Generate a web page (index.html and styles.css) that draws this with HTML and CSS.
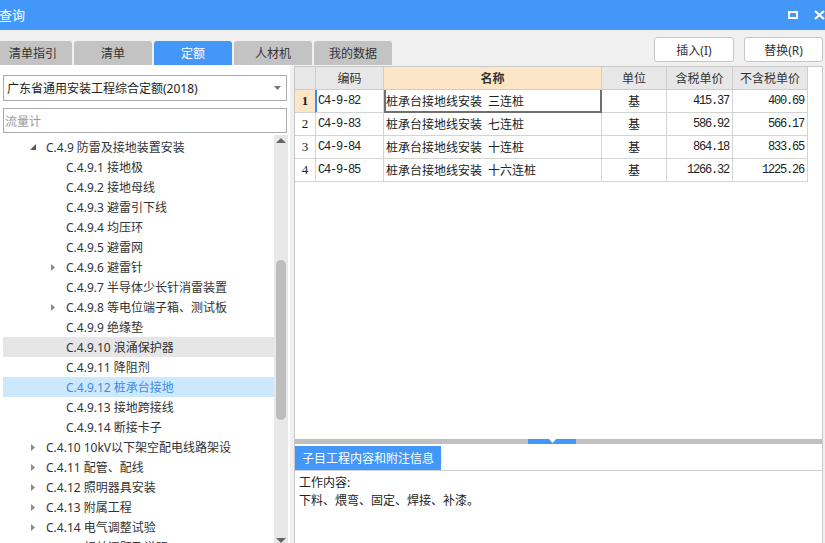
FILE: index.html
```html
<!DOCTYPE html>
<html lang="zh-CN">
<head>
<meta charset="utf-8">
<title>查询</title>
<link rel="stylesheet" href="styles.css">
</head>
<body>
<div class="win">
  <div class="titlebar">
    <span class="title">查询</span>
    <div class="winctl">
      <span class="max"></span>
      <svg class="close" width="11" height="10" viewBox="0 0 11 10"><path d="M1 1 L10 9 M10 1 L1 9" stroke="#fff" stroke-width="2.2" fill="none"/></svg>
    </div>
  </div>
  <div class="toolbar">
    <div class="tabs">
      <div class="tab">清单指引</div>
      <div class="tab">清单</div>
      <div class="tab on">定额</div>
      <div class="tab">人材机</div>
      <div class="tab">我的数据</div>
    </div>
    <div class="btns">
      <div class="btn">插入(I)</div>
      <div class="btn b2">替换(R)</div>
    </div>
  </div>
  <div class="main">
    <div class="left">
      <div class="select"><span>广东省通用安装工程综合定额(2018)</span><svg class="caret" width="7" height="4" viewBox="0 0 7 4"><path d="M0 0 H7 L3.5 4Z" fill="#777"/></svg></div>
      <div class="search">流量计</div>
      <div class="treewrap">
        <div class="tree">
          <div class="row l1"><span class="tw"><svg width="6" height="6" viewBox="0 0 6 6"><path d="M6 0 V6 H0Z" fill="#595959"/></svg></span><span>C.4.9 防雷及接地装置安装</span></div>
          <div class="row l2"><span class="tw"></span><span>C.4.9.1 接地极</span></div>
          <div class="row l2"><span class="tw"></span><span>C.4.9.2 接地母线</span></div>
          <div class="row l2"><span class="tw"></span><span>C.4.9.3 避雷引下线</span></div>
          <div class="row l2"><span class="tw"></span><span>C.4.9.4 均压环</span></div>
          <div class="row l2"><span class="tw"></span><span>C.4.9.5 避雷网</span></div>
          <div class="row l2"><span class="tw"><svg width="4" height="7" viewBox="0 0 4 7"><path d="M0 0 L4 3.5 L0 7Z" fill="#8a8a8a"/></svg></span><span>C.4.9.6 避雷针</span></div>
          <div class="row l2"><span class="tw"></span><span>C.4.9.7 半导体少长针消雷装置</span></div>
          <div class="row l2"><span class="tw"><svg width="4" height="7" viewBox="0 0 4 7"><path d="M0 0 L4 3.5 L0 7Z" fill="#8a8a8a"/></svg></span><span>C.4.9.8 等电位端子箱、测试板</span></div>
          <div class="row l2"><span class="tw"></span><span>C.4.9.9 绝缘垫</span></div>
          <div class="row l2 hover"><span class="tw"></span><span>C.4.9.10 浪涌保护器</span></div>
          <div class="row l2"><span class="tw"></span><span>C.4.9.11 降阻剂</span></div>
          <div class="row l2 sel"><span class="tw"></span><span>C.4.9.12 桩承台接地</span></div>
          <div class="row l2"><span class="tw"></span><span>C.4.9.13 接地跨接线</span></div>
          <div class="row l2"><span class="tw"></span><span>C.4.9.14 断接卡子</span></div>
          <div class="row l1"><span class="tw"><svg width="4" height="7" viewBox="0 0 4 7"><path d="M0 0 L4 3.5 L0 7Z" fill="#8a8a8a"/></svg></span><span>C.4.10 10kV以下架空配电线路架设</span></div>
          <div class="row l1"><span class="tw"><svg width="4" height="7" viewBox="0 0 4 7"><path d="M0 0 L4 3.5 L0 7Z" fill="#8a8a8a"/></svg></span><span>C.4.11 配管、配线</span></div>
          <div class="row l1"><span class="tw"><svg width="4" height="7" viewBox="0 0 4 7"><path d="M0 0 L4 3.5 L0 7Z" fill="#8a8a8a"/></svg></span><span>C.4.12 照明器具安装</span></div>
          <div class="row l1"><span class="tw"><svg width="4" height="7" viewBox="0 0 4 7"><path d="M0 0 L4 3.5 L0 7Z" fill="#8a8a8a"/></svg></span><span>C.4.13 附属工程</span></div>
          <div class="row l1"><span class="tw"><svg width="4" height="7" viewBox="0 0 4 7"><path d="M0 0 L4 3.5 L0 7Z" fill="#8a8a8a"/></svg></span><span>C.4.14 电气调整试验</span></div>
          <div class="row l1"><span class="tw"><svg width="4" height="7" viewBox="0 0 4 7"><path d="M0 0 L4 3.5 L0 7Z" fill="#8a8a8a"/></svg></span><span>C.4.15 相关问题及说明</span></div>
        </div>
        <div class="vs">
          <div class="arr"><svg width="10" height="5" viewBox="0 0 10 5"><path d="M0 5 L5 0 L10 5Z" fill="#666"/></svg></div>
          <div class="thumb"></div>
          <div class="arr down"><svg width="10" height="5" viewBox="0 0 10 5"><path d="M0 0 L5 5 L10 0Z" fill="#666"/></svg></div>
        </div>
      </div>
    </div>
    <div class="right">
      <div class="gridarea">
        <div class="grid">
          <div class="h"></div><div class="h">编码</div><div class="h hsel">名称</div><div class="h">单位</div><div class="h">含税单价</div><div class="h">不含税单价</div>

          <div class="rn cur"><b>1</b></div><div class="c code curcode">C4-9-82</div><div class="c name active">桩承台接地线安装&ensp;三连桩</div><div class="c unit">基</div><div class="c num">415.37</div><div class="c num">400.69</div>

          <div class="rn">2</div><div class="c code">C4-9-83</div><div class="c name">桩承台接地线安装&ensp;七连桩</div><div class="c unit">基</div><div class="c num">586.92</div><div class="c num">566.17</div>

          <div class="rn">3</div><div class="c code">C4-9-84</div><div class="c name">桩承台接地线安装&ensp;十连桩</div><div class="c unit">基</div><div class="c num">864.18</div><div class="c num">833.65</div>

          <div class="rn">4</div><div class="c code">C4-9-85</div><div class="c name">桩承台接地线安装&ensp;十六连桩</div><div class="c unit">基</div><div class="c num">1266.32</div><div class="c num">1225.26</div>
        </div>
      </div>
      <div class="splitter"><div class="handle"><svg width="7" height="4" viewBox="0 0 7 4"><path d="M0 0 H7 L3.5 4Z" fill="#fff"/></svg></div></div>
      <div class="dtabs"><div class="dtab">子目工程内容和附注信息</div></div>
      <div class="detail">工作内容:<br>下料、煨弯、固定、焊接、补漆。</div>
    </div>
  </div>
</div>
</body>
</html>
```
FILE: styles.css
```css
* { box-sizing: border-box; }
html, body { margin: 0; height: 100%; }
body {
  background: #f0f0f0;
  overflow: hidden;
  font-family: "Noto Sans", "Noto Sans CJK SC", sans-serif;
  font-size: 12px;
  color: #333;
}
.win {
  margin-left: -6px;
  width: 831px;
  height: 543px;
  display: flex;
  flex-direction: column;
}
.titlebar {
  height: 30px;
  flex: none;
  background: #4297f9;
  display: flex;
  align-items: center;
  padding-left: 5px;
  color: #fff;
}
.title { font-size: 13px; flex: 1; line-height: 30px; }
.winctl { display: flex; align-items: center; gap: 16px; }
.max {
  display: block;
  width: 10px;
  height: 8px;
  border: 2px solid #fff;
}
.close { display: block; }

.toolbar {
  height: 35px;
  flex: none;
  display: flex;
  justify-content: space-between;
}
.tabs { display: flex; gap: 2px; align-self: flex-end; }
.tab {
  width: 78px;
  height: 24px;
  background: #c3c3c3;
  border-radius: 3px 3px 0 0;
  display: flex;
  align-items: center;
  justify-content: center;
  color: #333;
}
.tab.on { background: #4297f9; color: #fff; }
.btns { display: flex; gap: 10px; padding-top: 7px; padding-right: 2px; }
.btn {
  width: 80px;
  height: 25px;
  background: #fff;
  border: 1px solid #c6c6c6;
  border-radius: 3px;
  display: flex;
  align-items: center;
  justify-content: center;
  color: #333;
}
.btn.b2 { width: 79px; }

.main { flex: 1; display: flex; min-height: 0; }
.left {
  width: 296px;
  flex: none;
  background: #fff;
  padding: 10px 3px 0 9px;
  display: flex;
  flex-direction: column;
  overflow: hidden;
}
.select {
  height: 26px;
  flex: none;
  border: 1px solid #ababab;
  display: flex;
  align-items: center;
  justify-content: space-between;
  padding: 0 5px 0 3px;
  color: #222;
}
.caret { display: block; }
.search {
  margin-top: 7px;
  height: 25px;
  flex: none;
  border: 1px solid #ababab;
  display: flex;
  align-items: center;
  padding-left: 1px;
  color: #9a9a9a;
}
.treewrap {
  margin-top: 2px;
  display: flex;
  width: 285px;
  flex: none;
  height: 420px;
}
.tree { width: 271px; flex: none; padding-top: 2px; }
.row {
  height: 20px;
  display: flex;
  align-items: center;
  white-space: nowrap;
  color: #333;
}
.row.l1 { padding-left: 22px; }
.row.l2 { padding-left: 42px; }
.tw {
  width: 16px;
  margin-right: 5px;
  height: 20px;
  display: flex;
  align-items: center;
  justify-content: center;
  flex: none;
}
.tw svg { display: block; }
.row.hover { background: #e6e6e6; }
.row.sel { background: #cce8ff; color: #3f8de4; }

.vs {
  width: 14px;
  flex: none;
  background: #e8e8e8;
  height: 412px;
  display: flex;
  flex-direction: column;
  align-items: center;
}
.arr { height: 10px; display: flex; align-items: center; justify-content: center; flex: none; }
.arr svg { display: block; }
.thumb {
  margin-top: 115px;
  width: 10px;
  height: 160px;
  border-radius: 5px;
  background: #bdbdbd;
  flex: none;
}
.arr.down { margin-top: auto; height: 14px; }

.right {
  width: 529px;
  flex: none;
  margin-left: 4px;
  margin-top: 1px;
  border: 1px solid #c8c8c8;
  border-bottom: none;
  background: #fff;
  display: flex;
  flex-direction: column;
}
.gridarea { height: 372px; flex: none; }
.grid {
  display: grid;
  grid-template-columns: 21px 68px 218px 65px 66px 75px;
  grid-auto-rows: 23px;
  width: 513px;
}
.grid > div {
  border-right: 1px solid #d4d4d4;
  border-bottom: 1px solid #d4d4d4;
  display: flex;
  align-items: center;
  white-space: nowrap;
  overflow: hidden;
}
.h {
  background: #e7e7e7;
  justify-content: center;
  color: #333;
  border-color: #cdcdcd !important;
}
.h.hsel { background: #fde6c8; font-weight: bold; }
.rn {
  justify-content: center;
  font-family: "Liberation Serif", serif;
  font-size: 13px;
  color: #222;
}
.rn.cur { background: #fde6c8; border-right-color: #3c8cf0 !important; }
.c { color: #222; }
.code {
  padding-left: 2px;
  font-family: "Liberation Mono", monospace;
  font-size: 12px;
  letter-spacing: -1.2px;
}
.curcode { box-shadow: inset 1px 0 #3c8cf0; }
.name { padding-left: 2px; }
.name.active { box-shadow: inset 2px 0 #707070, inset -1px 0 #707070, inset 0 -1px #707070; border-right-color: #707070 !important; border-bottom-color: #707070 !important; }
.unit { justify-content: center; }
.num {
  justify-content: flex-end;
  padding-right: 3px;
  font-family: "Liberation Mono", monospace;
  font-size: 12px;
  letter-spacing: -1.2px;
}

.splitter {
  height: 5px;
  flex: none;
  background: #c0c0c0;
  display: flex;
}
.handle {
  margin-left: 233px;
  width: 48px;
  height: 5px;
  background: #4297f9;
  display: flex;
  justify-content: center;
  align-items: flex-start;
}
.handle svg { display: block; }
.dtabs { margin-top: 2px; height: 24px; flex: none; display: flex; }
.dtab {
  width: 146px;
  height: 24px;
  background: #4297f9;
  color: #fff;
  display: flex;
  align-items: center;
  justify-content: center;
}
.detail {
  flex: 1;
  border-top: 1px solid #cfcfcf;
  padding: 3px 4px;
  line-height: 18px;
  color: #222;
}
```
